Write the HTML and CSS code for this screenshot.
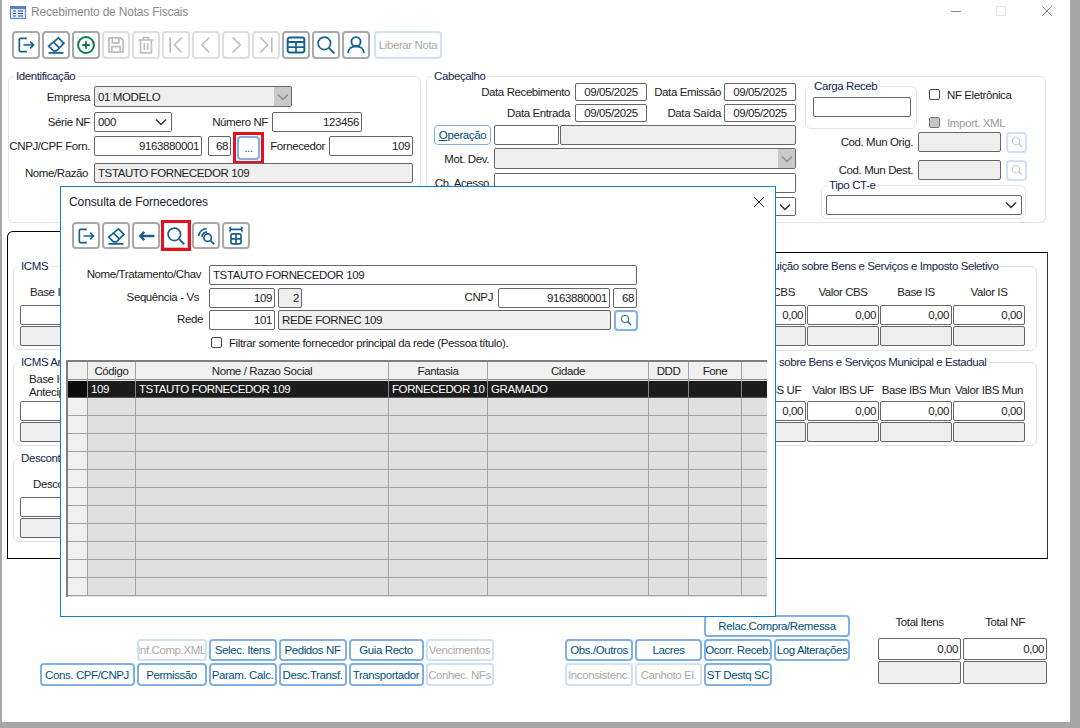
FILE: index.html
```html
<!DOCTYPE html>
<html lang="pt-BR">
<head>
<meta charset="utf-8">
<title>Recebimento de Notas Fiscais</title>
<link rel="stylesheet" href="styles.css">
</head>
<body>
<svg class="defs" xmlns="http://www.w3.org/2000/svg">
  <symbol id="i-exit" viewBox="0 0 24 24"><path d="M13 4H5.500A1.500 1.500 0 0 0 4 5.500v13A1.500 1.500 0 0 0 5.500 20H13M9 12h12M17 8l4 4-4 4" fill="none" stroke="currentColor" stroke-width="2"/></symbol>
  <symbol id="i-erase" viewBox="0 0 24 24"><path d="M15 3.500l6.500 6.500-9 9H9L3.200 13.200zM9 8.500l7 7M3 21.500h18" fill="none" stroke="currentColor" stroke-width="2"/></symbol>
  <symbol id="i-add" viewBox="0 0 24 24"><circle cx="12" cy="12" r="9.500" fill="none" stroke="currentColor" stroke-width="2.400"/><path d="M12 7.500v9M7.500 12h9" fill="none" stroke="currentColor" stroke-width="2.200"/></symbol>
  <symbol id="i-save" viewBox="0 0 24 24"><path d="M3.500 3.500h14l3 3v14h-17zM7.500 3.500v6h8v-6M7 20.500v-6.500h10v6.500" fill="none" stroke="currentColor" stroke-width="2"/></symbol>
  <symbol id="i-trash" viewBox="0 0 24 24"><path d="M3 6h18M9 6V3h6v3M5.500 6.500v15h13v-15M10 10v8M14 10v8" fill="none" stroke="currentColor" stroke-width="2"/></symbol>
  <symbol id="i-first" viewBox="0 0 24 24"><path d="M5 3v18M19 3l-9 9 9 9" fill="none" stroke="currentColor" stroke-width="2"/></symbol>
  <symbol id="i-prev" viewBox="0 0 24 24"><path d="M16 3l-9 9 9 9" fill="none" stroke="currentColor" stroke-width="2"/></symbol>
  <symbol id="i-next" viewBox="0 0 24 24"><path d="M8 3l9 9-9 9" fill="none" stroke="currentColor" stroke-width="2"/></symbol>
  <symbol id="i-last" viewBox="0 0 24 24"><path d="M19 3v18M5 3l9 9-9 9" fill="none" stroke="currentColor" stroke-width="2"/></symbol>
  <symbol id="i-table" viewBox="0 0 24 24"><path d="M4.500 3h15A2.500 2.500 0 0 1 22 5.500v13a2.500 2.500 0 0 1-2.500 2.500h-15A2.500 2.500 0 0 1 2 18.500v-13A2.500 2.500 0 0 1 4.500 3zM2 8.500h20" fill="none" stroke="currentColor" stroke-width="2.400"/><path d="M2 14.500h20M12 8.500v12" fill="none" stroke="currentColor" stroke-width="2"/></symbol>
  <symbol id="i-search" viewBox="0 0 24 24"><circle cx="10" cy="10" r="7.500" fill="none" stroke="currentColor" stroke-width="2"/><path d="M15.500 15.500L22 22" fill="none" stroke="currentColor" stroke-width="2.400"/></symbol>
  <symbol id="i-user" viewBox="0 0 24 24"><circle cx="12" cy="8" r="5.500" fill="none" stroke="currentColor" stroke-width="2.200"/><path d="M2.500 22c0-5.500 4-8.500 9.500-8.500s9.500 3 9.500 8.500" fill="none" stroke="currentColor" stroke-width="2.200"/></symbol>
  <symbol id="i-back" viewBox="0 0 24 24"><path d="M22 12H5M10 7l-5 5 5 5" fill="none" stroke="currentColor" stroke-width="2.800"/></symbol>
  <symbol id="i-radar" viewBox="0 0 24 24"><circle cx="14" cy="14" r="4.500" fill="none" stroke="currentColor" stroke-width="2"/><path d="M17.500 17.500L22 22M3 12C4 7 8 3.500 13 3M7 13c.5-3 3-5.500 6-6" fill="none" stroke="currentColor" stroke-width="2"/></symbol>
  <symbol id="i-cols" viewBox="0 0 24 24"><rect x="6" y="9.500" width="12" height="12" rx="2" fill="none" stroke="currentColor" stroke-width="2"/><path d="M6 15.500h12M12 9.500v12" fill="none" stroke="currentColor" stroke-width="2"/><path d="M4 4h16M5 1v6M19 1v6" fill="none" stroke="currentColor" stroke-width="2"/></symbol>
  <symbol id="i-chev" viewBox="0 0 12 8"><path d="M1 1.500l5 5 5-5" fill="none" stroke="currentColor" stroke-width="1.500"/></symbol>
</svg>

<div class="window">
  <header class="titlebar">
    <svg class="appicon" viewBox="0 0 16 13"><rect width="16" height="13" fill="#5a80c8"/><rect x="1" y="3" width="14" height="9" fill="#dfe8f6"/><path d="M3 5h3M3 7.500h3M3 10h3M8 5h5M8 7.500h5M8 10h5" stroke="#2b4f92"/></svg>
    <span class="wintitle">Recebimento de Notas Fiscais</span>
    <span class="wc wc-min"></span>
    <span class="wc wc-max"></span>
    <svg class="wc-close" viewBox="0 0 10 10"><path d="M0 0l10 10M10 0L0 10" stroke="#8a8a8a"/></svg>
  </header>

  <nav class="toolbar main-tb">
    <button class="tb"><svg class="ic"><use href="#i-exit"/></svg></button>
    <button class="tb"><svg class="ic"><use href="#i-erase"/></svg></button>
    <button class="tb"><svg class="ic green"><use href="#i-add"/></svg></button>
    <button class="tb off"><svg class="ic"><use href="#i-save"/></svg></button>
    <button class="tb off"><svg class="ic"><use href="#i-trash"/></svg></button>
    <button class="tb off"><svg class="ic"><use href="#i-first"/></svg></button>
    <button class="tb off"><svg class="ic"><use href="#i-prev"/></svg></button>
    <button class="tb off"><svg class="ic"><use href="#i-next"/></svg></button>
    <button class="tb off"><svg class="ic"><use href="#i-last"/></svg></button>
    <button class="tb"><svg class="ic"><use href="#i-table"/></svg></button>
    <button class="tb"><svg class="ic"><use href="#i-search"/></svg></button>
    <button class="tb"><svg class="ic"><use href="#i-user"/></svg></button>
    <button class="btn off liberar">Liberar Nota</button>
  </nav>

  <div class="toprow">
    <fieldset class="grp ident">
      <legend>Identificação</legend>
      <div class="row h21">
        <label class="lb w81 mr4">Empresa</label>
        <div class="f ro sel w198">01 MODELO<span class="arrow"><svg class="chev"><use href="#i-chev"/></svg></span></div>
      </div>
      <div class="row h20 mt5">
        <label class="lb w81 mr4">Série NF</label>
        <div class="f sel w78">000<svg class="chev"><use href="#i-chev"/></svg></div>
        <label class="lb w96 mr4">Número NF</label>
        <div class="f num w90">123456</div>
      </div>
      <div class="row h20 mt4">
        <label class="lb w81 mr4">CNPJ/CPF Forn.</label>
        <div class="f num w108">9163880001</div>
        <div class="f num w23 ml6">68</div>
        <span class="redbox"><button class="btn dots">...</button></span>
        <label class="lb w61 mr4">Fornecedor</label>
        <div class="f num w84">109</div>
      </div>
      <div class="row h20 mt7">
        <label class="lb w79 mr6">Nome/Razão</label>
        <div class="f ro w319">TSTAUTO FORNECEDOR 109</div>
      </div>
    </fieldset>

    <fieldset class="grp cab">
      <legend>Cabeçalho</legend>
      <div class="cab-in">
        <div class="cab-left">
          <div class="row h18">
            <label class="lb w143 mr5">Data Recebimento</label>
            <div class="f date">09/05/2025</div>
            <label class="lb w74 mr3">Data Emissão</label>
            <div class="f date">09/05/2025</div>
          </div>
          <div class="row h18 mt3">
            <label class="lb w143 mr5">Data Entrada</label>
            <div class="f date">09/05/2025</div>
            <label class="lb w74 mr3">Data Saída</label>
            <div class="f date">09/05/2025</div>
          </div>
          <div class="row h20 mt3">
            <button class="btn oper"><u>O</u>peração</button>
            <div class="f w65 ml3"></div>
            <div class="f ro w236 ml1"></div>
          </div>
          <div class="row h21 mt3">
            <label class="lb w62 mr5">Mot. Dev.</label>
            <div class="f ro sel w302"><span class="arrow"><svg class="chev"><use href="#i-chev"/></svg></span></div>
          </div>
          <div class="row h20 mt4">
            <label class="lb w62 mr5">Ch. Acesso</label>
            <div class="f w302"></div>
          </div>
          <div class="row h19 mt4">
            <label class="lb w62 mr5"></label>
            <div class="f sel w302"><svg class="chev"><use href="#i-chev"/></svg></div>
          </div>
        </div>
        <div class="cab-right">
          <div class="cr-top">
            <fieldset class="grp carga">
              <legend>Carga Receb</legend>
              <div class="f w98"></div>
            </fieldset>
            <div class="checks">
              <div class="chk-row"><span class="chk"></span><span>NF Eletrônica</span></div>
              <div class="chk-row dim"><span class="chk fill"></span><span>Import. XML</span></div>
            </div>
          </div>
          <div class="row h20 mt3">
            <label class="lb w108 mr5">Cod. Mun Orig.</label>
            <div class="f ro w83"></div>
            <button class="btn off lupa ml5"><svg class="ic12"><use href="#i-search"/></svg></button>
          </div>
          <div class="row h20 mt8">
            <label class="lb w108 mr5">Cod. Mun Dest.</label>
            <div class="f ro w83"></div>
            <button class="btn off lupa ml5"><svg class="ic12"><use href="#i-search"/></svg></button>
          </div>
          <fieldset class="grp tipo">
            <legend>Tipo CT-e</legend>
            <div class="f sel tipo-sel"><svg class="chev"><use href="#i-chev"/></svg></div>
          </fieldset>
        </div>
      </div>
    </fieldset>
  </div>

  <div class="tabs">
    <div class="tab"></div>
    <div class="tab-fill"></div>
  </div>
  <section class="panel">
    <div class="p-left">
      <fieldset class="grp tg">
        <legend>ICMS</legend>
        <div class="cols pt12">
          <div class="col lcol"><span class="cap">Base ICMS</span><div class="f num"></div><div class="f ro"></div></div>
        </div>
      </fieldset>
      <fieldset class="grp tg">
        <legend>ICMS Antecipado</legend>
        <div class="cols pt4">
          <div class="col lcol"><span class="cap two">Base ICMS<br>Antecipado</span><div class="f num"></div><div class="f ro"></div></div>
        </div>
      </fieldset>
      <fieldset class="grp tg">
        <legend>Descontos</legend>
        <div class="cols pt12">
          <div class="col lcol"><span class="cap desc">Desconto</span><div class="f num"></div><div class="f ro"></div></div>
        </div>
      </fieldset>
    </div>
    <div class="p-right">
      <fieldset class="grp tg tg1">
        <legend>Contribuição sobre Bens e Serviços e Imposto Seletivo</legend>
        <div class="cols rcols pt12">
          <div class="col"><span class="cap">Base CBS</span><div class="f num">0,00</div><div class="f ro"></div></div>
          <div class="col"><span class="cap">Valor CBS</span><div class="f num">0,00</div><div class="f ro"></div></div>
          <div class="col"><span class="cap">Base IS</span><div class="f num">0,00</div><div class="f ro"></div></div>
          <div class="col"><span class="cap">Valor IS</span><div class="f num">0,00</div><div class="f ro"></div></div>
        </div>
      </fieldset>
      <fieldset class="grp tg tg2">
        <legend>Imposto sobre Bens e Serviços Municipal e Estadual</legend>
        <div class="cols rcols pt14">
          <div class="col"><span class="cap gap4">Base IBS UF</span><div class="f num">0,00</div><div class="f ro"></div></div>
          <div class="col"><span class="cap gap4">Valor IBS UF</span><div class="f num">0,00</div><div class="f ro"></div></div>
          <div class="col"><span class="cap gap4">Base IBS Mun</span><div class="f num">0,00</div><div class="f ro"></div></div>
          <div class="col"><span class="cap gap4">Valor IBS Mun</span><div class="f num">0,00</div><div class="f ro"></div></div>
        </div>
      </fieldset>
    </div>
  </section>

  <footer class="bottom">
    <div class="bgrid bleft">
      <button class="btn off c2">Inf.Comp.XML</button>
      <button class="btn">Selec. Itens</button>
      <button class="btn">Pedidos NF</button>
      <button class="btn">Guia Recto</button>
      <button class="btn off">Vencimentos</button>
      <button class="btn">Cons. CPF/CNPJ</button>
      <button class="btn">Permissão</button>
      <button class="btn">Param. Calc.</button>
      <button class="btn">Desc.Transf.</button>
      <button class="btn">Transportador</button>
      <button class="btn off">Conhec. NFs</button>
    </div>
    <div class="bgrid bmid">
      <button class="btn relac">Relac.Compra/Remessa</button>
      <button class="btn">Obs./Outros</button>
      <button class="btn">Lacres</button>
      <button class="btn">Ocorr. Receb.</button>
      <button class="btn">Log Alterações</button>
      <button class="btn off">Inconsistenc.</button>
      <button class="btn off">Canhoto El.</button>
      <button class="btn">ST Destq SC</button>
    </div>
    <div class="totals">
      <span class="cap tcap">Total Itens</span>
      <span class="cap tcap">Total NF</span>
      <div class="f num">0,00</div>
      <div class="f num">0,00</div>
      <div class="f ro"></div>
      <div class="f ro"></div>
    </div>
  </footer>
</div>

<div class="dialog">
  <div class="d-title">
    <span>Consulta de Fornecedores</span>
    <svg class="d-close" viewBox="0 0 10 10"><path d="M0 0l10 10M10 0L0 10" stroke="#222"/></svg>
  </div>
  <nav class="toolbar d-tb">
    <button class="tb"><svg class="ic"><use href="#i-exit"/></svg></button>
    <button class="tb"><svg class="ic"><use href="#i-erase"/></svg></button>
    <button class="tb"><svg class="ic"><use href="#i-back"/></svg></button>
    <button class="tb red"><svg class="ic"><use href="#i-search"/></svg></button>
    <button class="tb"><svg class="ic"><use href="#i-radar"/></svg></button>
    <button class="tb"><svg class="ic"><use href="#i-cols"/></svg></button>
  </nav>
  <div class="row h20 mt16">
    <label class="lb w140 mr8">Nome/Tratamento/Chav</label>
    <div class="f w428">TSTAUTO FORNECEDOR 109</div>
  </div>
  <div class="row h20 mt3">
    <label class="lb w138 mr10">Sequência - Vs</label>
    <div class="f num w66">109</div>
    <div class="f ro num w24 ml3">2</div>
    <label class="lb w191 mr5">CNPJ</label>
    <div class="f num w112">9163880001</div>
    <div class="f num w24 ml3">68</div>
  </div>
  <div class="row h20 mt2">
    <label class="lb w142 mr6">Rede</label>
    <div class="f num w66">101</div>
    <div class="f ro w333 ml3">REDE FORNEC 109</div>
    <button class="btn lupa2 ml3"><svg class="ic12"><use href="#i-search"/></svg></button>
  </div>
  <div class="chk-row d-chk"><span class="chk"></span><span>Filtrar somente fornecedor principal da rede (Pessoa título).</span></div>
  <div class="gridwrap">
    <table class="grid">
      <colgroup><col class="c0"><col class="c1"><col class="c2w"><col class="c3"><col class="c4"><col class="c5"><col class="c6"><col class="c7"></colgroup>
      <thead><tr><th></th><th>Código</th><th>Nome / Razao Social</th><th>Fantasia</th><th>Cidade</th><th>DDD</th><th>Fone</th><th></th></tr></thead>
      <tbody>
        <tr class="sel-row"><td class="ind"></td><td>109</td><td>TSTAUTO FORNECEDOR 109</td><td>FORNECEDOR 10</td><td>GRAMADO</td><td></td><td></td><td></td></tr>
        <tr><td class="ind"></td><td></td><td></td><td></td><td></td><td></td><td></td><td></td></tr>
        <tr><td class="ind"></td><td></td><td></td><td></td><td></td><td></td><td></td><td></td></tr>
        <tr><td class="ind"></td><td></td><td></td><td></td><td></td><td></td><td></td><td></td></tr>
        <tr><td class="ind"></td><td></td><td></td><td></td><td></td><td></td><td></td><td></td></tr>
        <tr><td class="ind"></td><td></td><td></td><td></td><td></td><td></td><td></td><td></td></tr>
        <tr><td class="ind"></td><td></td><td></td><td></td><td></td><td></td><td></td><td></td></tr>
        <tr><td class="ind"></td><td></td><td></td><td></td><td></td><td></td><td></td><td></td></tr>
        <tr><td class="ind"></td><td></td><td></td><td></td><td></td><td></td><td></td><td></td></tr>
        <tr><td class="ind"></td><td></td><td></td><td></td><td></td><td></td><td></td><td></td></tr>
        <tr><td class="ind"></td><td></td><td></td><td></td><td></td><td></td><td></td><td></td></tr>
        <tr><td class="ind"></td><td></td><td></td><td></td><td></td><td></td><td></td><td></td></tr>
      </tbody>
    </table>
  </div>
</div>
</body>
</html>
```

FILE: styles.css
```css
* { box-sizing: border-box; }
html, body { margin: 0; padding: 0; }
body {
  position: relative;
  width: 1080px;
  height: 728px;
  overflow: hidden;
  background: #a6a6a6;
  font: 11.500px/14px "Liberation Sans", Arial, sans-serif;
  letter-spacing: -0.4px;
  color: #1c1c1c;
}
.defs { display: none; }
.window {
  margin-left: 2px;
  width: 1068px;
  height: 722px;
  background: #fff;
  display: flex;
  flex-direction: column;
}

/* title bar */
.titlebar { height: 31px; flex: none; display: flex; align-items: flex-start; padding-left: 8px; }
.appicon { width: 16px; height: 13px; margin-top: 6px; flex: none; }
.wintitle { margin: 5px 0 0 5px; color: #8a8a8a; width: 920px; flex: none; font-size: 12px; letter-spacing: -0.2px; }
.wc { display: block; flex: none; }
.wc-min { width: 10px; height: 1px; background: #8a8a8a; margin: 11px 0 0 0; }
.wc-max { width: 10px; height: 10px; border: 1px solid #e4e4e4; margin: 6px 0 0 35px; }
.wc-close { width: 10px; height: 10px; margin: 6px 0 0 36px; flex: none; }

/* toolbars */
.toolbar { display: flex; gap: 2px; flex: none; }
.main-tb { margin-left: 10px; height: 28px; }
.tb {
  width: 28px; height: 28px; padding: 0;
  border: 2px solid #a9a9a9; border-radius: 4px;
  background: #fff; color: #14608f;
  display: flex; align-items: center; justify-content: center;
}
.tb.off { border-color: #dedede; color: #bdbdbd; }
.ic { width: 20px; height: 20px; display: block; }
.ic.green { color: #0d7a4c; }
.ic12 { width: 12px; height: 12px; display: block; }
.tb.red {
  width: 30px; height: 31px; margin: -2px -1px;
  border: 3px solid #e8101e; border-radius: 0;
  box-shadow: inset -1px -1px 0 #c4c4c4;
}

/* generic buttons */
.btn {
  padding: 0; margin: 0;
  border: 2px solid #7fb0e6; border-radius: 4px;
  background: #fff; color: #00507a;
  font: inherit; letter-spacing: inherit; white-space: nowrap; overflow: hidden;
  display: flex; align-items: center; justify-content: center;
}
.btn.off { border-color: #cfe1f5; color: #a9a9a9; }
.liberar { width: 68px; height: 28px; margin-left: 2px; }
.redbox {
  display: block; flex: none; align-self: flex-start;
  width: 31px; height: 32px; margin: -4px 0 0 2px; padding: 1px;
  border: 3px solid #e8101e;
}
.dots { width: 23px; height: 24px; }
.oper { width: 57px; height: 20px; margin-left: 7px; border-width: 1px; }
.lupa { width: 21px; height: 21px; color: #b4c6d6; }
.btn.off.lupa { color: #bccad8; }
.lupa2 { width: 24px; height: 21px; color: #14608f; }

/* rows */
.row { display: flex; align-items: center; flex: none; }
.h18 { height: 18px; } .h19 { height: 19px; } .h20 { height: 20px; } .h21 { height: 21px; }
.mt2 { margin-top: 2px; } .mt3 { margin-top: 3px; } .mt4 { margin-top: 4px; } .mt5 { margin-top: 5px; }
.mt7 { margin-top: 7px; } .mt8 { margin-top: 8px; } .mt16 { margin-top: 16px; }
.ml1 { margin-left: 1px; } .ml3 { margin-left: 3px; } .ml5 { margin-left: 5px; } .ml6 { margin-left: 6px; }
.mr3 { margin-right: 3px; } .mr4 { margin-right: 4px; } .mr5 { margin-right: 5px; } .mr6 { margin-right: 6px; }
.mr8 { margin-right: 8px; } .mr10 { margin-right: 10px; }
.w23 { width: 23px; } .w24 { width: 24px; } .w61 { width: 61px; } .w62 { width: 62px; } .w65 { width: 65px; } .w66 { width: 66px; }
.w74 { width: 74px; } .w78 { width: 78px; } .w79 { width: 79px; } .w81 { width: 81px; } .w83 { width: 83px; }
.w84 { width: 84px; } .w90 { width: 90px; } .w96 { width: 96px; } .w98 { width: 98px; } .w108 { width: 108px; }
.w112 { width: 112px; } .w138 { width: 138px; } .w140 { width: 140px; } .w142 { width: 142px; } .w143 { width: 143px; }
.w191 { width: 191px; } .w198 { width: 198px; } .w236 { width: 236px; } .w302 { width: 302px; } .w319 { width: 319px; }
.w333 { width: 333px; } .w428 { width: 428px; }

.lb { display: block; flex: none; text-align: right; white-space: nowrap; }
.dialog .lb { padding-bottom: 2px; }

/* fields */
.f {
  flex: none;
  height: 100%;
  border: 1px solid #666;
  border-radius: 2px;
  background: #fff;
  padding: 0 3px;
  display: flex; align-items: center;
  white-space: nowrap; overflow: hidden;
  color: #1c1c1c;
}
.f.num { justify-content: flex-end; padding: 0 2px; }
.f.ro { background: #efefef; }
.f.sel { padding-right: 0; }
.chev { width: 12px; height: 8px; margin: 0 4px 0 auto; color: #333; flex: none; }
.arrow { width: 17px; height: 100%; margin-left: auto; background: #c9c9c9; display: flex; align-items: center; justify-content: center; flex: none; }
.arrow .chev { margin: 0; color: #8f8f8f; }
.date { width: 72px; justify-content: center; padding: 0; }

/* groups */
.grp {
  margin: 0; padding: 0; min-width: 0;
  border: 1px solid #e3e3e3; border-radius: 6px;
}
.grp legend { margin-left: 5px; padding: 0 2px; line-height: 14px; color: #14254a; white-space: nowrap; }

.toprow { display: flex; gap: 5px; margin: 10px 0 0 6px; flex: none; }
.ident { width: 413px; height: 154px; padding-top: 3px; }
.cab { width: 620px; height: 154px; }
.cab-in { display: flex; }
.cab-left { width: 369px; flex: none; }
.cab-right { margin-left: 9px; width: 240px; flex: none; }
.cr-top { display: flex; height: 46px; }
.carga { width: 112px; height: 50px; margin-top: -4px; padding: 4px 0 0 7px; flex: none; }
.carga legend { margin-left: -1px; }
.carga .f { height: 20px; }
.checks { margin: 6px 0 0 12px; }
.chk-row { display: flex; align-items: center; gap: 7px; height: 11px; }
.chk-row + .chk-row { margin-top: 17px; }
.chk { width: 11px; height: 11px; border: 1px solid #444; border-radius: 2px; background: #fff; flex: none; display: block; }
.chk.fill { background: #c4c4c4; border-color: #777; }
.dim { color: #9a9a9a; }
.tipo { width: 205px; height: 41px; margin: -2px 0 0 16px; padding: 3px 0 0 4px; }
.tipo legend { margin-left: 1px; }
.tipo-sel { width: 196px; height: 20px; }

/* tabs + panel */
.tabs { display: flex; height: 22px; margin: 8px 0 0 5px; width: 1041px; flex: none; }
.tab { width: 200px; border: 1px solid #000; border-bottom: 0; border-radius: 6px 0 0 0; flex: none; }
.tab-fill { flex: 1; border-bottom: 1px solid #000; }
.panel {
  display: flex; justify-content: space-between;
  width: 1041px; height: 306px; margin-left: 5px; flex: none;
  border: 1px solid #000; border-top: 0; border-right-color: #333;
  padding: 6px 10px 0 5px;
}
.p-left { width: 400px; display: flex; flex-direction: column; gap: 5px; }
.p-right { width: 347px; display: flex; flex-direction: column; gap: 4px; }
.tg { height: 91px; flex: none; }
.tg1 { height: 92px; }
.tg1 legend { margin-left: 46px; }
.tg2 legend { margin-left: 45px; }
.cols { display: flex; gap: 1px; }
.rcols { justify-content: flex-end; padding-right: 11px; }
.pt4 { padding-top: 4px; } .pt12 { padding-top: 12px; } .pt14 { padding-top: 14px; }
.col { width: 72px; display: flex; flex-direction: column; }
.lcol { width: 200px; margin-left: 6px; }
.col .f { height: 20px; }
.col .f.ro { margin-top: 1px; }
.cap { display: block; text-align: center; white-space: nowrap; height: 14px; margin-bottom: 6px; }
.lcol .cap { text-align: left; padding-left: 10px; }
.lcol .cap.two { height: 26px; line-height: 13px; margin-bottom: 2px; padding-left: 9px; }
.lcol .cap.desc { padding-left: 13px; }
.cap.gap4 { margin-bottom: 4px; }

/* bottom */
.bottom { display: flex; align-items: flex-start; padding-top: 56px; flex: 1; }
.bgrid { display: grid; gap: 2px; flex: none; }
.bleft {
  margin: 24px 0 0 37.500px;
  grid-template-columns: 95px 70px 68px 68px 75px 68px;
  grid-template-rows: 22px 23px;
}
.c2 { grid-column: 2; }
.bmid {
  margin-left: 71.500px;
  grid-template-columns: 68px 67px 68px 76px;
  grid-template-rows: 22px 22px 23px;
}
.relac { grid-column: 3 / span 2; }
.totals {
  margin-left: 28px; flex: none;
  display: grid; grid-template-columns: 83px 84px; column-gap: 2px;
  grid-template-rows: 22px 22px 23px; row-gap: 1px;
}
.tcap { margin: 0; line-height: 14px; }

/* dialog window */
.dialog {
  position: absolute; left: 60px; top: 186px;
  width: 716px; height: 431px;
  background: #fff;
  border: 1px solid #0f7cd8;
  display: flex; flex-direction: column;
}
.d-title { height: 35px; flex: none; display: flex; justify-content: space-between; align-items: center; padding: 0 11px 6px 8px; color: #14202e; letter-spacing: -0.1px; font-size: 12px; }
.d-close { width: 10px; height: 10px; }
.d-tb { margin-left: 11px; height: 27px; }
.d-tb .tb { height: 27px; }
.d-tb .tb.red { height: 31px; }
.d-chk { margin: 7px 0 0 150px; flex: none; }

/* data grid */
.gridwrap {
  margin: 12px 0 0 5px; width: 701px; height: 237px; flex: none;
  overflow: hidden; background: #e0e0e0;
  border-top: 2px solid #7f7f7f; border-left: 2px solid #7f7f7f;
}
.grid { table-layout: fixed; border-collapse: separate; border-spacing: 0; width: 700px; }
.c0 { width: 20px; } .c1 { width: 48px; } .c2w { width: 253px; } .c3 { width: 99px; }
.c4 { width: 161px; } .c5 { width: 40px; } .c6 { width: 53px; } .c7 { width: 26px; }
.grid th, .grid td {
  height: 18px; padding: 0 3px;
  border-right: 1px solid #a2a2a2; border-bottom: 1px solid #a2a2a2;
  font-weight: normal; white-space: nowrap; overflow: hidden; line-height: 14px;
}
.grid th { background: #f0f0f0; text-align: center; height: 18px; border-bottom-color: #8c8c8c; }
.grid td.ind { background: #f0f0f0; }
.sel-row td { background: #1c1c1c; color: #fff; border-top: 1px solid #e8e8e8; border-bottom: 1px solid #555; border-right-color: #8a8a8a; }
.grid .sel-row td.ind { background: #0b0b0b; }
```
